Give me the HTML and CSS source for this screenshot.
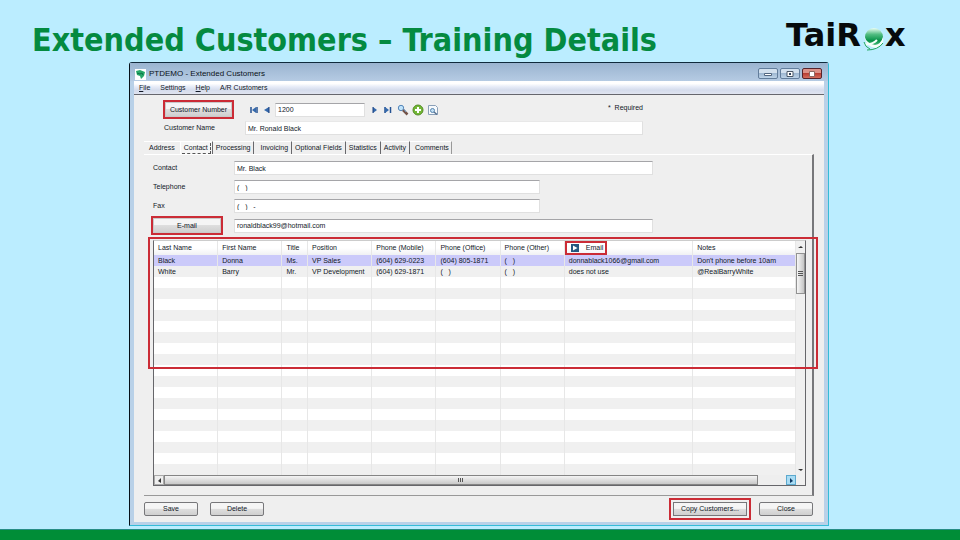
FILE: index.html
```html
<!DOCTYPE html>
<html lang="en">
<head>
<meta charset="utf-8">
<title>Extended Customers – Training Details</title>
<link rel="stylesheet" href="styles.css">
</head>
<body>
<header class="slide-head">
  <h1>Extended Customers – Training Details</h1>
  <div class="logo"><span>TaiR</span>
    <svg width="22" height="24" viewBox="0 0 22 24" aria-hidden="true"><defs><linearGradient id="g" x1="0" y1="0" x2="0" y2="1"><stop offset="0" stop-color="#edfff4"/><stop offset=".35" stop-color="#53bd82"/><stop offset=".7" stop-color="#079348"/><stop offset="1" stop-color="#56c487"/></linearGradient></defs><circle cx="11" cy="10" r="9" fill="url(#g)"/><path d="M1 9Q4 17 12 18Q18 17 20 10Q22 19 13 21Q3 20 1 9Z" fill="#f5fffa"/><path d="M2 17Q9 18 14 13" fill="none" stroke="#f5fffa" stroke-width="2"/><path d="M1 15Q2 20 7 22M4 23Q15 23 20 16" fill="none" stroke="#20a75f" stroke-width="1"/></svg><span>x</span></div>
</header>
<main class="window">
  <div class="titlebar">
    <svg width="11" height="11" viewBox="0 0 11 11" aria-hidden="true"><path fill="#fff" d="M0 0h11v11H0z"/><path d="M1 2l4-1 5 2-1 4-3 3-1-3-3-1z" fill="#26a868"/><path d="M2 4l3 1 2-1 1 2" stroke="#0b7245" fill="none"/></svg>
    <span>PTDEMO - Extended Customers</span>
    <div class="win-buttons">
      <button aria-label="Minimize"><svg width="8" height="6"><path d="M.5 2.500h7v2h-7z" fill="#fff" stroke="#536780"/></svg></button>
      <button aria-label="Maximize"><svg width="8" height="6"><path d="M1 .5h6v5H1z" fill="#fff" stroke="#4b5868"/><path d="M3 2h2v2H3z" fill="#33465d"/></svg></button>
      <button class="x" aria-label="Close window"><svg width="8" height="6"><path d="M1.500 .5h5v5h-5z" fill="#fff" stroke="#8d6863"/></svg></button>
    </div>
  </div>
  <nav class="menu"><button><u>F</u>ile</button><button>Settings</button><button><u>H</u>elp</button><button>A/R Customers</button></nav>
  <div class="content">
    <div class="lookup">
      <button class="btn marked number-btn" id="cn">Customer Number</button>
      <div class="nav">
        <button aria-label="First"><svg width="8" height="8"><path d="M1 1v6M7 1v6" stroke="#245293" stroke-width="1.500"/><path d="M6 1v6L2 4z" fill="#3468ab"/></svg></button>
        <button aria-label="Previous"><svg width="8" height="8"><path d="M6 1v6L1 4z" fill="#3468ab"/><path d="M6 1v6" stroke="#183f7e"/></svg></button>
        <input aria-labelledby="cn" value="1200">
        <button aria-label="Next"><svg width="8" height="8"><path d="M2 1v6l4-3z" fill="#3468ab"/><path d="M2 1v6" stroke="#183f7e"/></svg></button>
        <button aria-label="Last"><svg width="8" height="8"><path d="M1 1v6M6.500 1v6" stroke="#245293" stroke-width="1.500"/><path d="M1 1v6l4-3z" fill="#3468ab"/></svg></button>
        <button aria-label="Find"><svg width="12" height="12"><circle cx="4" cy="4" r="2.700" fill="#bfe3fb" stroke="#5686b8"/><path d="M6 6l4.500 4.500" stroke="#735348" stroke-width="2.500"/><path d="M6 4l3 4" stroke="#6d99c4"/></svg></button>
        <button aria-label="New"><svg width="12" height="12"><circle cx="6" cy="6" r="5" fill="#72b735" stroke="#548b26"/><path d="M6 3v6M3 6h6" stroke="#fff" stroke-width="2"/></svg></button>
        <button aria-label="Preview"><svg width="12" height="12"><path d="M1.500 1.500h7l2 2v7h-9z" fill="#f6f9fc" stroke="#8ba0b8"/><circle cx="5.500" cy="6.500" r="2" fill="#c1def2" stroke="#5886b0"/><path d="M7 8l3 2.500" stroke="#55708f" stroke-width="1.500"/></svg></button>
      </div>
      <span class="required">* &nbsp;Required</span>
    </div>
    <div class="name-row"><label for="name">Customer Name</label><input id="name" value="Mr. Ronald Black"></div>
    <div class="tabs" role="tablist"><button role="tab">Address</button><button role="tab" class="active" aria-selected="true"><span>Contact</span></button><button role="tab">Processing</button><button role="tab">Invoicing</button><button role="tab">Optional Fields</button><button role="tab">Statistics</button><button role="tab">Activity</button><button role="tab">Comments</button></div>
    <section class="panel">
      <div class="form">
        <label for="contact">Contact</label><input id="contact" value="Mr. Black">
        <label for="tel">Telephone</label><input id="tel" class="short" value="(   )">
        <label for="fax">Fax</label><input id="fax" class="short" value="(   )   -">
        <button class="btn marked email-btn" id="em">E-mail</button><input aria-labelledby="em" value="ronaldblack99@hotmail.com">
      </div>
      <div class="grid">
        <div class="grid-main">
          <table>
            <colgroup><col class="c-name"><col class="c-name"><col class="c-title"><col class="c-name"><col class="c-name"><col class="c-name"><col class="c-name"><col class="c-email"><col></colgroup>
            <thead><tr><th>Last Name</th><th>First Name</th><th>Title</th><th>Position</th><th>Phone (Mobile)</th><th>Phone (Office)</th><th>Phone (Other)</th><th class="email-head"><div><svg width="8" height="8"><path d="M0 0h8v8H0z" fill="#24577f"/><path d="M2 1.500v5L6.500 4z" fill="#fff"/></svg>Email</div></th><th>Notes</th></tr></thead>
            <tbody>
              <tr class="selected"><td>Black</td><td>Donna</td><td>Ms.</td><td>VP Sales</td><td>(604) 629-0223</td><td>(604) 805-1871</td><td>(&nbsp;&nbsp; )</td><td>donnablack1066@gmail.com</td><td>Don't phone before 10am</td></tr>
              <tr><td>White</td><td>Barry</td><td>Mr.</td><td>VP Development</td><td>(604) 629-1871</td><td>(&nbsp;&nbsp; )</td><td>(&nbsp;&nbsp; )</td><td>does not use</td><td>@RealBarryWhite</td></tr>
              <tr><td><td><td><td><td><td><td><td><td></tr><tr><td><td><td><td><td><td><td><td><td></tr>
              <tr><td><td><td><td><td><td><td><td><td></tr><tr><td><td><td><td><td><td><td><td><td></tr>
              <tr><td><td><td><td><td><td><td><td><td></tr><tr><td><td><td><td><td><td><td><td><td></tr>
              <tr><td><td><td><td><td><td><td><td><td></tr><tr><td><td><td><td><td><td><td><td><td></tr>
              <tr><td><td><td><td><td><td><td><td><td></tr><tr><td><td><td><td><td><td><td><td><td></tr>
              <tr><td><td><td><td><td><td><td><td><td></tr><tr><td><td><td><td><td><td><td><td><td></tr>
              <tr><td><td><td><td><td><td><td><td><td></tr><tr><td><td><td><td><td><td><td><td><td></tr>
              <tr><td><td><td><td><td><td><td><td><td></tr><tr><td><td><td><td><td><td><td><td><td></tr>
              <tr><td><td><td><td><td><td><td><td><td></tr><tr><td><td><td><td><td><td><td><td><td></tr>
            </tbody>
          </table>
          <div class="hscroll"><button aria-label="Scroll left"><svg width="5" height="5"><path d="M4 0v5L1 3z" fill="#333"/></svg></button><div class="hthumb"><svg width="6" height="4"><path d="M.5 0v4M2.500 0v4M4.500 0v4" stroke="#555"/></svg></div><button class="go" aria-label="Scroll right"><svg width="5" height="5"><path d="M1 0v5l3-2z" fill="#0d3964"/></svg></button></div>
        </div>
        <div class="vscroll"><button aria-label="Scroll up"><svg width="5" height="3"><path d="M0 2h5L3 0z" fill="#333"/></svg></button><div class="vthumb"><svg width="5" height="6"><path d="M0 .5h5M0 2.500h5M0 4.500h5" stroke="#555"/></svg></div><button class="down" aria-label="Scroll down"><svg width="5" height="3"><path d="M0 0h5L3 2z" fill="#333"/></svg></button></div>
        <div class="callout"></div>
      </div>
    </section>
    <footer class="actions"><button class="btn">Save</button><button class="btn">Delete</button><button class="btn copy">Copy Customers...</button><button class="btn">Close</button></footer>
  </div>
</main>
<div class="band"></div>
</body>
</html>
```
FILE: styles.css
```css
* { box-sizing: border-box; }
body {
  margin: 0;
  min-height: 100vh;
  display: flex;
  flex-direction: column;
  background: #bbedff;
  font: 7px/10px "Liberation Sans", Arial, sans-serif;
  color: #111827;
}
button, input { font: inherit; color: inherit; }
button { margin: 0; padding: 0; border: 0; background: none; white-space: nowrap; }
svg { display: block; flex: none; }
.slide-head {
  display: flex;
  justify-content: space-between;
  height: 62px;
  padding: 16px 48px 0 32px;
  font-family: "DejaVu Sans Condensed", "Noto Sans", sans-serif;
}
h1 { margin: 0; font-size: 32px; line-height: 48px; color: #048a40; white-space: nowrap; }
.logo { display: flex; width: 126px; height: 38px; font: 700 32px/38px "DejaVu Sans", sans-serif; color: #060a0c; }
.logo svg { margin: 11px 0 0 2px; }

.window {
  margin: 0 131px 0 129px;
  padding: 0 4px 3px;
  border: 1px solid #35bcd8;
  border-top-color: #102a3c;
  border-left-color: #061018;
  border-radius: 3px 3px 0 0;
  background: #b9d1e8;
}
.titlebar {
  display: flex;
  align-items: center;
  gap: 3px;
  height: 18px;
  margin: 0 -4px;
  padding: 4px 6px 0 5px;
  font-size: 8px;
  background: linear-gradient(#9ab4d0, #b5cbe3);
}
.titlebar span { color: #0b1118; }
.win-buttons { display: flex; align-self: flex-end; gap: 2px; margin: 0 0 2px auto; }
.win-buttons button {
  display: grid;
  place-items: center;
  width: 20px;
  height: 11px;
  border: 1px solid #627d9b;
  border-radius: 2px;
  background: linear-gradient(#d2e0ee 45%, #9fb8d2 50%, #bdd3e8);
}
.win-buttons .x { border-color: #57232b; background: linear-gradient(#dc9188 40%, #b93f35 50%, #d56c5c); }
.menu {
  display: flex;
  gap: 10px;
  height: 14px;
  padding: 0 5px;
  border-bottom: 1px solid #66666d;
  background: linear-gradient(#fff 20%, #e6ebf7 45%, #d5dcec 70%, #e0e4f0);
}
.content { padding: 5px 10px 0; background: #efefef; }
.lookup { display: flex; align-items: center; height: 19px; padding-left: 19px; }
.btn {
  height: 14px;
  border: 1px solid #77777a;
  border-radius: 2px;
  background: linear-gradient(#f5f5f5 45%, #dedede 50%, #cfcfcf);
}
.marked { padding: 0; border-color: #c9c9c9; border-radius: 0; outline: 2px solid #cb2c36; }
.number-btn { width: 67px; height: 15px; margin-left: 2px; }
.nav { display: flex; align-items: center; gap: 4px; margin-left: 18px; }
.nav input { width: 90px; height: 14px; margin: 0 2px 0 0; }
.nav button + button { margin-left: 1px; }
.nav button:nth-last-child(-n+2) { margin-left: -1px; }
input {
  min-width: 0;
  height: 14px;
  padding: 0 2px;
  border: 1px solid #e0e0e0;
  border-top-color: #a5a5a8;
  border-radius: 0;
  background: #fff;
}
.required { margin: 0 171px 4px auto; }
.name-row { display: flex; align-items: center; margin-top: 2px; padding: 0 171px 0 20px; }
.name-row label { width: 81px; }
.name-row input { flex: 1; border-top-color: #e8e8e8; }

.tabs { display: flex; height: 13px; margin-top: 6px; }
.tabs button { padding: 0 3px; border: solid #fff; border-width: 1px 1px 0 0; border-right-color: #68686c; }
.tabs button:nth-child(4) { padding-left: 6px; }
.tabs button:last-child { padding: 0 2px 0 5px; border-right-color: #999; }
.tabs button:first-child { padding: 0 5px; border-right-color: #fff; }
.tabs .active { padding: 0 1px; background: #f6f6f6; }
.active span { display: block; padding: 0 2px; border: 1px dashed #555; border-width: 0 1px 1px 0; }
.panel {
  padding: 6px 6px 9px 9px;
  border: solid #fff;
  border-width: 1px 2px 1px 0;
  border-right-color: #77777a;
  border-bottom-color: #999;
}
.form {
  display: grid;
  grid-template-columns: 81px 1fr;
  row-gap: 5px;
  align-items: center;
  padding-right: 153px;
}
.form input { width: 100%; }
.form .short { width: 73%; }
.email-btn { width: 68px; height: 15px; }

.grid {
  position: relative;
  display: flex;
  margin-top: 7px;
  border: 1px solid #66666a;
  border-top-color: #ccc;
  background: #fff;
}
.callout { position: absolute; inset: -4px -13px 116px -6px; border: 2px solid #cb2c36; pointer-events: none; }
.grid-main { flex: 1; min-width: 0; }
table { width: 100%; border-collapse: separate; border-spacing: 0; table-layout: fixed; }
.c-name { width: 10%; }
.c-title { width: 4%; }
.c-email { width: 20%; }
th, td { height: 11px; padding: 0 0 0 4px; border-right: 1px solid #e7e7e7; font-weight: 400; text-align: left; line-height: 10px; white-space: nowrap; }
th { height: 14px; background: linear-gradient(#fff 50%, #f0f1f3); }
tbody tr:nth-child(even) { background: #f0f0f0; }
tbody .selected { background: #cbcafa; }
th.email-head { padding: 0; }
.email-head div { display: flex; align-items: center; gap: 7px; width: 42px; height: 14px; padding-left: 4px; border: 2px solid #cb2c36; }
.hscroll { display: flex; height: 10px; background: #eee; }
.hscroll button { width: 10px; display: grid; place-items: center; border: 1px solid #aaa; }
.hthumb { display: grid; place-items: center; flex: 1; margin-right: 28px; border: 1px solid #858585; background: linear-gradient(#f4f4f4, #c8c8c8); }
.hscroll .go { border-color: #5ca9ce; background: #a9dcf4; }
.vscroll { display: flex; flex-direction: column; width: 9px; background: #f0f0f0; }
.vscroll button { display: grid; place-items: center; height: 12px; }
.vthumb { display: grid; place-items: center; height: 41px; border: 1px solid #929292; background: linear-gradient(90deg, #f7f7f7, #c5c5c5); }
.vscroll .down { margin: auto 0 9px; }
.actions { display: flex; align-items: center; gap: 12px; height: 26px; }
.actions .btn { width: 54px; }
.actions .copy { width: 74px; margin-left: auto; border-radius: 0; outline: 2px solid #cb2c36; outline-offset: 2px; }
.actions .copy + .btn { margin-right: 1px; }
.band { height: 11px; margin-top: auto; border-top: 1px solid #268d85; background: #008d37; }
```
